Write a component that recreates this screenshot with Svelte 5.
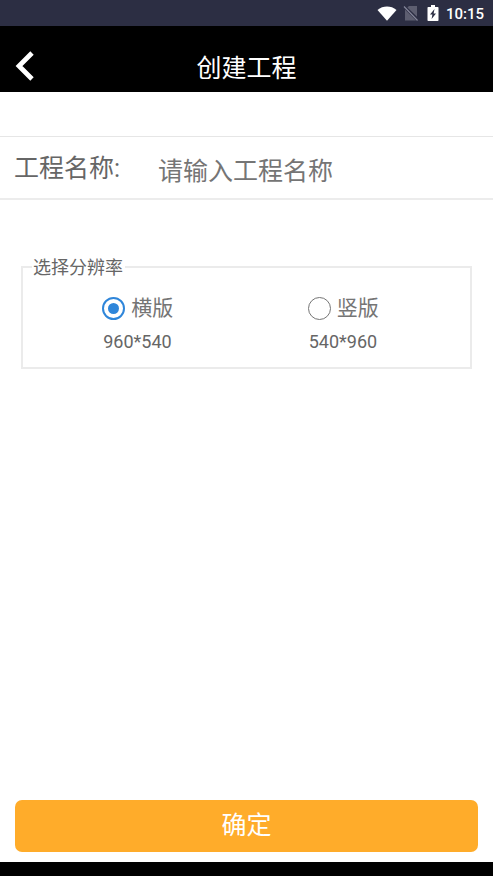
<script>
  let projectName = '';
  let resolution = '960*540';

  const options = [
    { label: '横版', value: '960*540' },
    { label: '竖版', value: '540*960' }
  ];

  function handleSubmit() {
    projectName = projectName.trim();
  }

  function goBack() {
    history.back();
  }
</script>

<div class="page">
  <div class="status-bar">
    <svg class="wifi" viewBox="0 0 20 15" aria-hidden="true">
      <path d="M0.5 4C6 -0.6 14 -0.6 19.5 4L10 14.8Z" fill="#fff" />
    </svg>
    <svg class="sim" viewBox="0 0 16 16" aria-hidden="true">
      <path d="M6 1H14V11.8L4.4 2.5ZM2 4.5L13 15.5H2Z" fill="#5d5e70" />
      <path d="M1 1.5L14.5 15.5" stroke="#85869a" stroke-width="1.2" />
    </svg>
    <svg class="battery" viewBox="0 0 12 16" aria-hidden="true">
      <path d="M4 0H8V2H10.7Q11.5 2 11.5 2.8V15.2Q11.5 16 10.7 16H1.3Q0.5 16 0.5 15.2V2.8Q0.5 2 1.3 2H4Z" fill="#fff" />
      <path d="M7.5 4L3 9.6H5.4L4.6 14L9 8.4H6.6Z" fill="#2c2e43" />
    </svg>
    <span class="time">10:15</span>
  </div>

  <header>
    <button type="button" class="back" aria-label="返回" on:click={goBack}>
      <svg viewBox="0 0 20 32" aria-hidden="true">
        <path d="M17 3L4 16L17 29" fill="none" stroke="#fff" stroke-width="4.8" />
      </svg>
    </button>
    <h1>创建工程</h1>
  </header>

  <form on:submit|preventDefault={handleSubmit}>
    <div class="form-row">
      <label for="name">工程名称:</label>
      <input type="text" id="name" placeholder="请输入工程名称" bind:value={projectName} />
    </div>

    <fieldset>
      <legend>选择分辨率</legend>
      <div class="options">
        {#each options as option}
          <label class="option">
            <span class="choice">
              <input type="radio" name="resolution" value={option.value} bind:group={resolution} />
              {option.label}
            </span>
            <span class="size">{option.value}</span>
          </label>
        {/each}
      </div>
    </fieldset>

    <button type="submit" class="submit">确定</button>
  </form>

  <div class="nav-bar"></div>
</div>

<style>
  :global(body) {
    margin: 0;
    background: #fff;
  }

  .page {
    display: flex;
    flex-direction: column;
    min-height: 100vh;
    color: #666;
    font-family: Roboto, "Noto Sans CJK SC", sans-serif;
  }

  .status-bar {
    display: flex;
    align-items: center;
    justify-content: flex-end;
    height: 26px;
    padding-right: 9px;
    background: #2c2e43;
    color: #fff;
  }

  .wifi {
    width: 20px;
    height: 15px;
    margin-right: 6px;
  }

  .sim {
    width: 16px;
    height: 16px;
    margin-right: 8px;
  }

  .battery {
    width: 12px;
    height: 16px;
    margin-right: 7px;
  }

  .time {
    padding-top: 2px;
    font-size: 15px;
    font-weight: 500;
    line-height: 24px;
  }

  header {
    display: grid;
    grid-template-columns: 48px 1fr 48px;
    align-items: center;
    box-sizing: border-box;
    height: 66px;
    padding-top: 14px;
    background: #000;
    color: #fff;
  }

  .back {
    display: flex;
    padding: 0 0 0 15px;
    border: none;
    background: none;
    cursor: pointer;
  }

  .back svg {
    width: 20px;
    height: 32px;
  }

  h1 {
    margin: 0;
    padding-top: 6px;
    font-size: 25px;
    font-weight: 400;
    line-height: 36px;
    text-align: center;
  }

  form {
    display: flex;
    flex: 1;
    flex-direction: column;
    padding-top: 44px;
  }

  .form-row {
    display: flex;
    align-items: center;
    height: 61px;
    padding-left: 14px;
    border-top: 1px solid #e6e6e6;
    border-bottom: 2px solid #ececec;
  }

  .form-row label {
    width: 144px;
    padding-top: 2px;
    font-size: 25px;
    line-height: 36px;
  }

  .form-row input {
    flex: 1;
    min-width: 0;
    height: 36px;
    padding: 8px 0 0;
    border: none;
    outline: none;
    background: none;
    color: #666;
    font-family: inherit;
    font-size: 25px;
  }

  .form-row input::placeholder {
    color: #757575;
  }

  fieldset {
    min-width: 0;
    margin: 54px 21px 0;
    padding: 0 24px 12px 12px;
    border: 2px solid #ebebeb;
  }

  legend {
    margin-left: -3px;
    padding: 2px 2px 0 1px;
    font-size: 18px;
    line-height: 24px;
  }

  .options {
    display: grid;
    grid-template-columns: 1fr 1fr;
    justify-items: center;
    padding-top: 13px;
  }

  .option {
    display: flex;
    flex-direction: column;
    gap: 6px;
    cursor: pointer;
  }

  .choice {
    display: flex;
    align-items: center;
    gap: 6px;
    color: #757575;
    font-size: 21px;
    line-height: 30px;
  }

  .choice input {
    display: grid;
    place-items: center;
    box-sizing: border-box;
    width: 23px;
    height: 23px;
    margin: 0;
    border: 1px solid #757575;
    border-radius: 50%;
    appearance: none;
  }

  .choice input:checked {
    border: 2px solid #2f86da;
  }

  .choice input:checked::before {
    width: 11px;
    height: 11px;
    border-radius: 50%;
    background: #2f86da;
    content: '';
  }

  .size {
    padding-left: 1px;
    font-size: 18px;
    line-height: 26px;
  }

  .submit {
    height: 52px;
    margin: auto 15px 10px;
    padding: 0 0 6px;
    border: none;
    border-radius: 7px;
    background: #ffac2a;
    color: #fff;
    font-family: inherit;
    font-size: 25px;
    cursor: pointer;
  }

  .nav-bar {
    height: 14px;
    background: #000;
  }
</style>
